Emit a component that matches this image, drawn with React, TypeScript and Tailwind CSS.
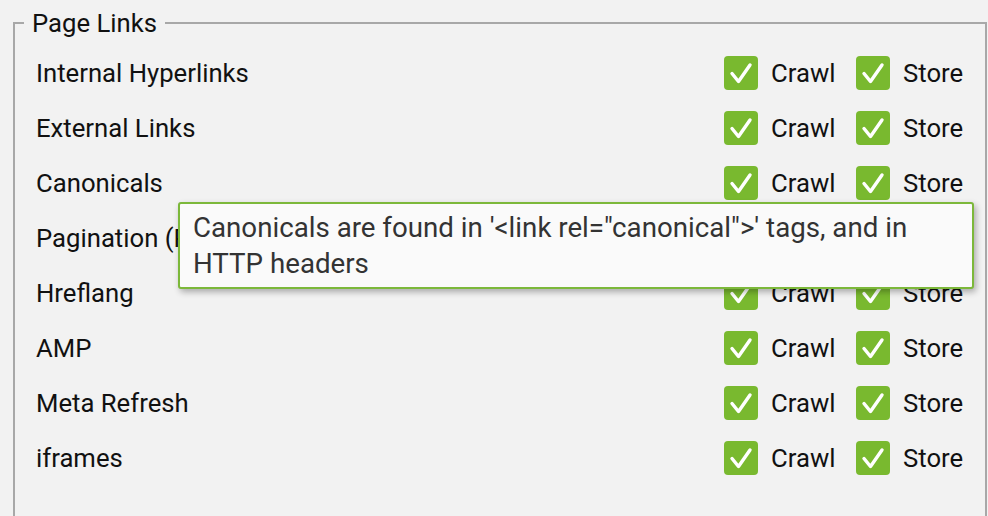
const rows = [
  "Internal Hyperlinks",
  "External Links",
  "Canonicals",
  "Pagination (Rel Next/Prev)",
  "Hreflang",
  "AMP",
  "Meta Refresh",
  "iframes",
]

function Check({ label }: { label: string }) {
  return (
    <div className="flex items-center gap-[13px]">
      <svg viewBox="0 0 34 34" className="w-[34px] h-[34px] shrink-0">
        <rect x="0" y="0" width="34" height="34" rx="4" fill="#79b92f" />
        <path
          d="M8 17.5 L14.5 25.5 L26 9"
          fill="none"
          stroke="white"
          strokeWidth="3.4"
          strokeLinecap="round"
          strokeLinejoin="round"
        />
      </svg>
      <span>{label}</span>
    </div>
  )
}

export default function App() {
  return (
    <div
      className="relative w-[988px] h-[516px] overflow-hidden bg-[#f2f2f2] text-[#111] text-[25.7px] leading-[28px]"
      style={{ fontFamily: "Roboto, 'Liberation Sans', sans-serif" }}
    >
      <fieldset className="ml-[13px] mt-[9px] w-[974px] h-[560px] border-2 border-[#a8a8a8]">
        <legend className="ml-[9px] px-[8px] text-[#111]">Page Links</legend>
        {/* rows */}
        <div className="mt-[8px] pl-[21px] flex flex-col">
          {rows.map((r) => (
            <div key={r} className="flex h-[55px] items-center">
              <div className="flex-1 whitespace-nowrap">{r}</div>
              <div className="w-[132px]">
                <Check label="Crawl" />
              </div>
              <div className="w-[129px]">
                <Check label="Store" />
              </div>
            </div>
          ))}
        </div>
      </fieldset>

      {/* Tooltip */}
      <div className="absolute left-[178px] top-[202px] w-[796px] h-[87px] rounded-[3px] border-2 border-[#7cb83a] bg-[#fafafa] pl-[13px] pt-[6px] pr-4 text-[#333] text-[27.7px] leading-[36px] shadow-[2px_3px_6px_rgba(0,0,0,0.3)]">
        Canonicals are found in '&lt;link rel="canonical"&gt;' tags, and in HTTP headers
      </div>
    </div>
  )
}
